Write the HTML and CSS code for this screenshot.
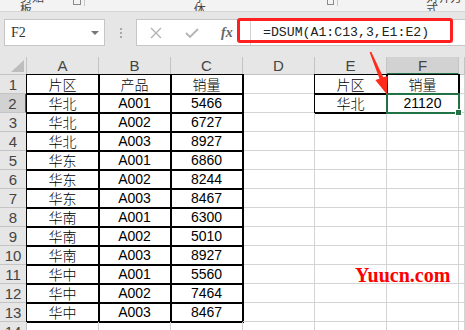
FILE: index.html
```html
<html>
<head>
<title>DSUM</title>
<link rel="stylesheet" href="styles.css">
</head>
<body>

<div class="ribbon">
  <span class="grp g1">剪贴板</span><span class="launch"></span><span class="rsep"></span>
  <span class="grp g2">字体</span><span class="launch l2"></span><span class="rsep"></span>
  <span class="grp g3">对齐方式</span>
</div>

<div class="fbar">
  <div class="namebox"><span class="ref">F2</span><span class="drop"></span></div>
  <div class="dots"><i></i><i></i><i></i></div>
  <div class="formula">
    <div class="tools">
      <svg class="ico" width="12" height="12" viewBox="0 0 12 12"><path d="M1 1 L11 11 M11 1 L1 11" stroke="#b4b4b4" stroke-width="1.4" fill="none"/></svg>
      <svg class="ico" width="14" height="12" viewBox="0 0 14 12"><path d="M1 6 L5 10 L13 2" stroke="#b4b4b4" stroke-width="1.8" fill="none"/></svg>
      <span class="fx">fx</span>
    </div>
    <div class="input">=DSUM(A1:C13,3,E1:E2)</div>
  </div>
</div>

<div class="sheet">
  <div class="c h corner"><svg width="13" height="12" viewBox="0 0 13 12"><polygon points="0,12 13,12 13,0" fill="#bdbdbd"/></svg></div>
  <div class="c h">A</div><div class="c h">B</div><div class="c h">C</div><div class="c h">D</div><div class="c h">E</div><div class="c h hs">F</div><div class="c h"></div>

  <div class="c h">1</div><div class="c k">片区</div><div class="c k">产品</div><div class="c k">销量</div><div class="c"></div><div class="c k">片区</div><div class="c k">销量</div><div class="c"></div>
  <div class="c h rs">2</div><div class="c k">华北</div><div class="c k">A001</div><div class="c k">5466</div><div class="c"></div><div class="c k">华北</div><div class="c k sel">21120</div><div class="c"></div>
  <div class="c h">3</div><div class="c k">华北</div><div class="c k">A002</div><div class="c k">6727</div><div class="c"></div><div class="c"></div><div class="c"></div><div class="c"></div>
  <div class="c h">4</div><div class="c k">华北</div><div class="c k">A003</div><div class="c k">8927</div><div class="c"></div><div class="c"></div><div class="c"></div><div class="c"></div>
  <div class="c h">5</div><div class="c k">华东</div><div class="c k">A001</div><div class="c k">6860</div><div class="c"></div><div class="c"></div><div class="c"></div><div class="c"></div>
  <div class="c h">6</div><div class="c k">华东</div><div class="c k">A002</div><div class="c k">8244</div><div class="c"></div><div class="c"></div><div class="c"></div><div class="c"></div>
  <div class="c h">7</div><div class="c k">华东</div><div class="c k">A003</div><div class="c k">8467</div><div class="c"></div><div class="c"></div><div class="c"></div><div class="c"></div>
  <div class="c h">8</div><div class="c k">华南</div><div class="c k">A001</div><div class="c k">6300</div><div class="c"></div><div class="c"></div><div class="c"></div><div class="c"></div>
  <div class="c h">9</div><div class="c k">华南</div><div class="c k">A002</div><div class="c k">5010</div><div class="c"></div><div class="c"></div><div class="c"></div><div class="c"></div>
  <div class="c h">10</div><div class="c k">华南</div><div class="c k">A003</div><div class="c k">8927</div><div class="c"></div><div class="c"></div><div class="c"></div><div class="c"></div>
  <div class="c h">11</div><div class="c k">华中</div><div class="c k">A001</div><div class="c k">5560</div><div class="c"></div><div class="c"></div><div class="c"></div><div class="c"></div>
  <div class="c h">12</div><div class="c k">华中</div><div class="c k">A002</div><div class="c k">7464</div><div class="c"></div><div class="c"></div><div class="c"></div><div class="c"></div>
  <div class="c h">13</div><div class="c k">华中</div><div class="c k">A003</div><div class="c k">8467</div><div class="c"></div><div class="c"></div><div class="c"></div><div class="c"></div>
  <div class="c h">14</div><div class="c"></div><div class="c"></div><div class="c"></div><div class="c"></div><div class="c"></div><div class="c"></div><div class="c"></div>
</div>

<!-- annotations drawn over the screenshot -->
<div class="redbox"></div>
<svg class="arrow" width="465" height="330" viewBox="0 0 465 330">
  <polygon points="369.6,52.3 379.5,78.7 375.3,80.1 387,94.5 387.8,75.9 383.3,77.3 371.2,51.7" fill="#ff2a1a"/>
</svg>
<div class="mark">Yuucn.com</div>

</body>
</html>
```

FILE: styles.css
```css
body {
   margin: 0;
   width: 465px;
   height: 330px;
   overflow: hidden;
   position: relative;
   background: #e6e6e6;
   font-family: "Liberation Sans", "Noto Sans CJK SC", sans-serif; }

/* ribbon group labels, mostly scrolled off */

.ribbon {
   height: 11px;
   display: flex;
   align-items: flex-start;
   overflow: hidden;
   background: #f3f3f3;
   border-bottom: 1px solid #d6d6d6; }

.grp {
   font-size: 12px;
   line-height: 12px;
   margin-top: -8px;
   color: #444; }

.g1 { margin-left: 20px; width: 36px; }
.g2 { margin-left: 109px; width: 26px; }
.g3 { margin-left: 88px; }

.launch {
   width: 7px;
   height: 7px;
   margin-left: 24px;
   margin-top: -4px;
   border: 1px solid #8a8a8a; }

.l2 { margin-left: 112px; }

.rsep {
   width: 1px;
   height: 6px;
   margin-left: 3px;
   background: #c8c8c8; }

/* formula bar */

.fbar {
   height: 45px;
   padding-top: 7px;
   box-sizing: border-box;
   display: flex;
   align-items: flex-start; }

.namebox {
   width: 101px;
   height: 27px;
   margin-left: 4px;
   box-sizing: border-box;
   border: 1px solid #c6c6c6;
   background: #fff;
   display: flex;
   align-items: center;
   justify-content: space-between;
   padding: 0 5px 0 6px; }

.ref {
   font-family: "Liberation Serif", serif;
   font-size: 14px;
   color: #333; }

.drop {
   width: 0;
   height: 0;
   border-left: 4px solid transparent;
   border-right: 4px solid transparent;
   border-top: 4px solid #777; }

.dots {
   width: 31px;
   height: 27px;
   display: flex;
   flex-direction: column;
   align-items: center;
   justify-content: center;
   gap: 2px; }

.dots i {
   width: 2px;
   height: 2px;
   background: #a8a8a8; }

.formula {
   flex: 1;
   height: 27px;
   box-sizing: border-box;
   border: 1px solid #c6c6c6;
   border-right: none;
   background: #fff;
   display: flex; }

.tools {
   width: 114px;
   box-sizing: border-box;
   display: flex;
   align-items: center;
   padding-left: 13px;
   gap: 23px;
   border-right: 1px solid #d0d0d0; }

.fx {
   font-family: "Liberation Serif", serif;
   font-style: italic;
   font-weight: bold;
   font-size: 14px;
   color: #666;
   margin-left: -1px; }

.input {
   padding-left: 12px;
   font-family: "Liberation Mono", monospace;
   font-size: 13.2px;
   line-height: 25px;
   color: #222; }

/* worksheet */

.sheet {
   display: grid;
   grid-template-columns: 27px repeat(6, 72px) 1fr;
   grid-template-rows: 18px;
   grid-auto-rows: 19px;
   background: #fff; }

.c {
   border-right: 1px solid #d4d4d4;
   border-bottom: 1px solid #d4d4d4;
   display: flex;
   align-items: center;
   justify-content: center;
   font-size: 14px;
   font-weight: 300;
   white-space: nowrap;
   color: #000; }

.h {
   background: #e6e6e6;
   color: #444;
   font-size: 15px;
   border-right-color: #c4c4c4;
   border-bottom-color: #c4c4c4; }

.corner {
   align-items: flex-end;
   justify-content: flex-end;
   padding: 0 2px 2px 0; }

.hs {
   background: #d2d2d2;
   border-bottom: 2px solid #217346; }

.rs {
   background: #d2d2d2;
   border-right: 2px solid #217346; }

.k {
   outline: 1px solid #000;
   border-right-color: #000;
   border-bottom-color: #000; }

.sel {
   position: relative; }

.sel::before {
   content: "";
   position: absolute;
   top: -1px;
   left: -1px;
   right: -2px;
   bottom: -2px;
   border: 2px solid #217346;
   z-index: 2; }

.sel::after {
   content: "";
   position: absolute;
   right: -4px;
   bottom: -4px;
   width: 5px;
   height: 5px;
   background: #217346;
   border: 1px solid #fff;
   z-index: 3; }

/* annotations */

.redbox {
   position: absolute;
   left: 237px;
   top: 18px;
   width: 216px;
   height: 25px;
   box-sizing: border-box;
   border: 3px solid #ff1f1f;
   border-radius: 3px; }

.arrow {
   position: absolute;
   left: 0;
   top: 0;
   z-index: 5; }

.mark {
   position: absolute;
   left: 355px;
   top: 264px;
   font-family: "Liberation Serif", serif;
   font-weight: bold;
   font-size: 20px;
   color: #ff0000; }
```
